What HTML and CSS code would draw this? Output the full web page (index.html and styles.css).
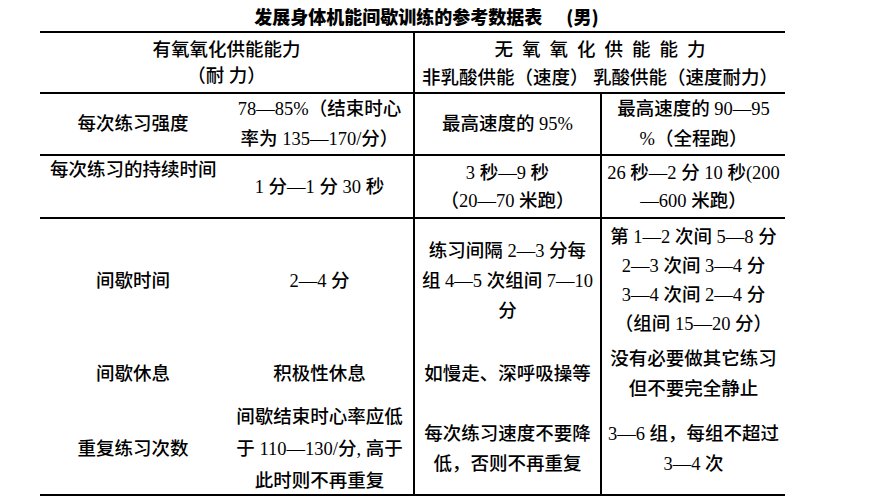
FILE: index.html
```html
<!DOCTYPE html>
<html lang="zh-CN">
<head>
<meta charset="utf-8">
<title>发展身体机能间歇训练的参考数据表</title>
<link rel="stylesheet" href="styles.css">
</head>
<body>
<div class="page">
  <h1 class="title">发展身体机能间歇训练的参考数据表<span class="sex">(男)</span></h1>
  <div class="grid">
    <div class="cell head span2 br bb"><span class="t">有氧氧化供能能力<br>（耐 力）</span></div>
    <div class="cell head headright span2 bb"><span class="t"><span class="spaced">无氧氧化供能能力</span><br>非乳酸供能（速度） 乳酸供能（速度耐力）</span></div>

    <div class="cell bb"><span class="t">每次练习强度</span></div>
    <div class="cell bb br"><span class="t">78—85%（结束时心<br>率为 135—170/分）</span></div>
    <div class="cell bb br"><span class="t">最高速度的 95%</span></div>
    <div class="cell bb"><span class="t">最高速度的 90—95<br>%（全程跑）</span></div>

    <div class="cell bb topleft"><span class="t">每次练习的持续时间</span></div>
    <div class="cell bb br"><span class="t">1 分—1 分 30 秒</span></div>
    <div class="cell bb br tight"><span class="t">3 秒—9 秒<br>（20—70 米跑）</span></div>
    <div class="cell bb tight"><span class="t">26 秒—2 分 10 秒(200<br>—600 米跑）</span></div>

    <div class="cell"><span class="t">间歇时间</span></div>
    <div class="cell br"><span class="t">2—4 分</span></div>
    <div class="cell br"><span class="t">练习间隔 2—3 分每<br>组 4—5 次组间 7—10<br>分</span></div>
    <div class="cell lh29"><span class="t">第 1—2 次间 5—8 分<br>2—3 次间 3—4 分<br>3—4 次间 2—4 分<br>（组间 15—20 分）</span></div>

    <div class="cell"><span class="t">间歇休息</span></div>
    <div class="cell br"><span class="t">积极性休息</span></div>
    <div class="cell br"><span class="t">如慢走、深呼吸操等</span></div>
    <div class="cell"><span class="t">没有必要做其它练习<br>但不要完全静止</span></div>

    <div class="cell"><span class="t">重复练习次数</span></div>
    <div class="cell br lh32"><span class="t">间歇结束时心率应低<br>于 110—130/分, 高于<br>此时则不再重复</span></div>
    <div class="cell br"><span class="t">每次练习速度不要降<br>低，否则不再重复</span></div>
    <div class="cell"><span class="t">3—6 组，每组不超过<br>3—4 次</span></div>
  </div>
</div>
</body>
</html>
```

FILE: styles.css
```css
* {
  box-sizing: border-box;
}

body {
  margin: 0;
  background: #ffffff;
  color: #000000;
  font-family: "Liberation Serif", "Noto Sans CJK SC", serif;
  font-size: 18.5px;
  font-weight: 500;
}

.page {
  padding-left: 40px;
  width: 785px;
}

.title {
  margin: 0;
  height: 31px;
  padding-left: 28px;
  font-family: "Noto Sans CJK SC", sans-serif;
  font-size: 18px;
  font-weight: 900;
  line-height: 32px;
  text-align: center;
  white-space: nowrap;
}

.sex {
  margin-left: 24px;
}

.grid {
  display: grid;
  width: 745px;
  grid-template-columns: 186px 189px 187px 183px;
  grid-template-rows: 61px 62px 63px 124px 61px 90px;
  border-top: 2px solid #000000;
  border-bottom: 2px solid #000000;
}

.cell {
  display: flex;
  align-items: center;
  justify-content: center;
  text-align: center;
  line-height: 30px;
  white-space: nowrap;
}

.span2 {
  grid-column: span 2;
}

.br {
  border-right: 2px solid #000000;
}

.bb {
  border-bottom: 2px solid #000000;
}

.head {
  line-height: 26px;
}

.headright {
  line-height: 28px;
  padding-top: 2px;
}

.spaced {
  letter-spacing: 9px;
  padding-left: 9px;
}

.topleft {
  align-items: flex-start;
  justify-content: flex-start;
  padding-left: 10px;
  line-height: 28px;
}

.tight {
  line-height: 28px;
}

.lh29 {
  line-height: 29px;
}

.lh32 {
  line-height: 32px;
}
```
